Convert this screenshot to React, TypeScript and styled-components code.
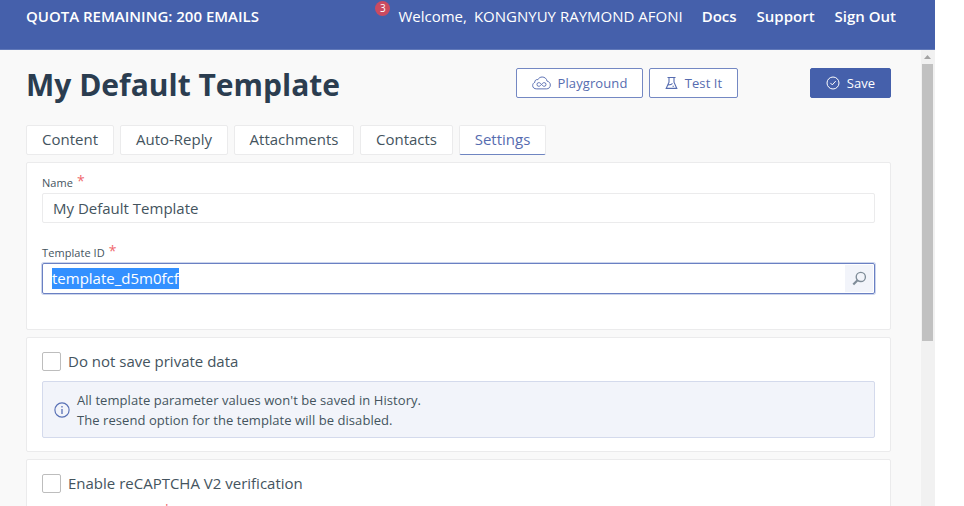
import React from 'react';
import styled, { createGlobalStyle } from 'styled-components';

const GlobalStyle = createGlobalStyle`
  *, *::before, *::after { box-sizing: border-box; }
  body { margin: 0; background: #fff; overflow: hidden; }
  button, input { font-family: inherit; }
`;

const brand = '#4560ab';
const line = '#ebebec';

const Page = styled.div`
  width: 935px;
  height: 506px;
  overflow: hidden;
  display: flex;
  flex-direction: column;
  background: #f9f9f9;
  color: #44545e;
  font-family: 'Open Sans', 'Noto Sans', sans-serif;
`;

const Header = styled.header`
  flex: none;
  height: 50px;
  padding: 0 39px 0 26px;
  display: flex;
  justify-content: space-between;
  align-items: flex-start;
  background: ${brand};
  border-bottom: 1px solid #6179b9;
  color: #fff;
`;

const Quota = styled.div`
  font-size: 15px;
  font-weight: 600;
  line-height: 20px;
  padding-top: 6px;
  white-space: nowrap;
`;

const UserNav = styled.nav`
  display: flex;
  align-items: flex-start;
  font-size: 15px;
  line-height: 20px;
  white-space: nowrap;
`;

const Badge = styled.span`
  width: 15px;
  height: 15px;
  margin: 1px 8px 0 0;
  border-radius: 50%;
  background: #cb4a60;
  font-size: 10px;
  line-height: 15px;
  text-align: center;
`;

const Welcome = styled.span<{ $gap: number }>`
  padding-top: 6px;
  margin-right: ${(p) => p.$gap}px;
  font-weight: 400;
`;

const NavLink = styled.a`
  padding-top: 6px;
  font-weight: 600;
  & + & { margin-left: 20px; }
`;

const Body = styled.div`
  flex: 1;
  min-height: 0;
  display: flex;
  justify-content: space-between;
`;

const Main = styled.main`
  width: 865px;
  margin-left: 26px;
  display: flex;
  flex-direction: column;
`;

const TitleRow = styled.div`
  flex: none;
  display: flex;
  align-items: flex-start;
  height: 75px;
  padding-top: 18px;
`;

const Title = styled.h1`
  flex: 1;
  margin: -3px 0 0;
  font-size: 30px;
  line-height: 40px;
  font-weight: 700;
  color: #2b3d50;
  white-space: nowrap;
`;

const Button = styled.button<{ $width: number; $primary?: boolean }>`
  width: ${(p) => p.$width}px;
  height: 30px;
  padding: 0;
  margin-left: ${(p) => (p.$primary ? 72 : 6)}px;
  display: flex;
  align-items: center;
  justify-content: center;
  gap: 7px;
  border: 1px solid ${(p) => (p.$primary ? brand : '#7488c3')};
  border-radius: 2px;
  background: ${(p) => (p.$primary ? brand : '#fff')};
  color: ${(p) => (p.$primary ? '#fff' : '#566cb0')};
  font-size: 13px;
  font-weight: ${(p) => (p.$primary ? 500 : 400)};
  letter-spacing: 0.1px;
`;

const Tabs = styled.div`
  flex: none;
  display: flex;
  gap: 6px;
  height: 37px;
`;

const Tab = styled.div<{ $width: number; $active?: boolean }>`
  width: ${(p) => p.$width}px;
  height: 30px;
  border: 1px solid ${line};
  border-bottom-color: ${(p) => (p.$active ? '#6f85c1' : line)};
  border-radius: 2px;
  background: #fff;
  color: ${(p) => (p.$active ? '#566cb0' : '#44545e')};
  font-size: 15px;
  line-height: 26px;
  text-align: center;
`;

const Card = styled.section<{ $height: number }>`
  flex: none;
  height: ${(p) => p.$height}px;
  padding: 0 15px;
  border: 1px solid ${line};
  border-radius: 2px;
  background: #fff;
  & + & { margin-top: 7px; }
`;

const Label = styled.label<{ $top: number; $indent?: number }>`
  display: flex;
  gap: 4px;
  padding-top: ${(p) => p.$top}px;
  padding-left: ${(p) => p.$indent ?? 0}px;
  font-size: 11px;
  line-height: 16px;
  letter-spacing: 0.07px;
  white-space: nowrap;
`;

const Star = styled.span`
  color: #f0696f;
  font-size: 14px;
  line-height: 12px;
`;

const NameField = styled.div`
  height: 30px;
  margin-top: 2px;
  padding-left: 10px;
  border: 1px solid ${line};
  border-radius: 2px;
  font-size: 15px;
  line-height: 28px;
`;

const IdField = styled.div`
  height: 31px;
  margin-top: 2px;
  padding: 1px 1px 1px 9px;
  display: flex;
  align-items: center;
  justify-content: space-between;
  border: 1px solid #6a80c3;
  border-radius: 2px;
  box-shadow: 0 0 0 1px #ccd5ec;
`;

const Selection = styled.span`
  background: #3390ff;
  color: #fff;
  font-size: 15px;
  line-height: 21px;
  height: 21px;
`;

const SearchButton = styled.span`
  width: 28px;
  height: 27px;
  display: flex;
  align-items: center;
  justify-content: center;
  background: #f2f4fa;
`;

const CheckRow = styled.div`
  display: flex;
  align-items: center;
  gap: 7px;
  height: 20px;
  margin-top: 13px;
  font-size: 15px;
  line-height: 20px;
`;

const Checkbox = styled.span`
  width: 19px;
  height: 19px;
  border: 1px solid #bdbdbd;
  border-radius: 2px;
`;

const Notice = styled.div`
  height: 57px;
  margin-top: 10px;
  padding-left: 11px;
  display: flex;
  align-items: center;
  gap: 7px;
  border: 1px solid #d4daec;
  border-radius: 2px;
  background: #f2f4fa;
  font-size: 13px;
  line-height: 20px;
  letter-spacing: 0.06px;
`;

const Scrollbar = styled.div`
  width: 14px;
  padding: 0 2px 0 1px;
  background: #f1f1f1;
`;

const Arrow = styled.svg`
  display: block;
  width: 11px;
  height: 14px;
`;

const Thumb = styled.div`
  height: 277px;
  background: #c1c1c1;
`;

const CloudIcon = () => (
  <svg width="19" height="14" viewBox="0 0 20 14" fill="none" stroke="currentColor" strokeWidth="1">
    <path d="M5 13.200C2.300 13.200.7 11.800.7 9.700.7 8 1.700 6.800 3 6.300 2.600 4.300 4.600 2.900 6.200 3.500 7.200 1.500 8.900.7 10.700.7c2.700 0 4.700 1.700 5.100 4.300 2.100.4 3.500 2 3.500 4.100 0 2.500-1.700 4.100-4.100 4.100Z" />
    <path d="M10 8.500C8.800 7.200 8.100 6.600 7.200 6.600a1.950 1.950 0 0 0 0 3.900c.9 0 1.600-.7 2.800-2s1.900-1.900 2.800-1.900a1.950 1.950 0 0 1 0 3.900c-.9 0-1.600-.7-2.800-2Z" />
  </svg>
);

const FlaskIcon = () => (
  <svg width="13" height="14" viewBox="0 0 13 14" fill="none" stroke="currentColor" strokeWidth="1.100">
    <path d="M2.500 1.500h8M4 1.500v4.700L1.200 12.400h10.600L9 6.200V1.500M3 9l3-.4 1.500-1.200M7.500 10.300h1.400" />
  </svg>
);

const CheckIcon = () => (
  <svg width="14" height="14" viewBox="0 0 14 14" fill="none" stroke="currentColor" strokeWidth="1">
    <circle cx="7" cy="7" r="6" />
    <path d="m4.400 6.900 1.900 2 3.400-3.800" />
  </svg>
);

const SearchIcon = () => (
  <svg width="15" height="15" viewBox="0 0 15 15" fill="none" stroke="#7f8c98">
    <circle cx="8.800" cy="5.900" r="4.600" strokeWidth="1.350" />
    <path d="M5.500 9.300 1.300 13.500" strokeWidth="2.200" />
  </svg>
);

const InfoIcon = () => (
  <svg width="16" height="16" viewBox="0 0 16 16" fill="none" stroke="#5870b5">
    <circle cx="8" cy="8" r="7.100" strokeWidth="1.150" />
    <path d="M8 7v5M8 4v1.500" strokeWidth="1.300" />
  </svg>
);

export default function App() {
  return (
    <Page>
      <GlobalStyle />
      <Header>
        <Quota>QUOTA REMAINING: 200 EMAILS</Quota>
        <UserNav>
          <Badge>3</Badge>
          <Welcome $gap={7}>Welcome,</Welcome>
          <Welcome $gap={19}>KONGNYUY RAYMOND AFONI</Welcome>
          <NavLink>Docs</NavLink>
          <NavLink>Support</NavLink>
          <NavLink>Sign Out</NavLink>
        </UserNav>
      </Header>
      <Body>
        <Main>
          <TitleRow>
            <Title>My Default Template</Title>
            <Button $width={127}><CloudIcon />Playground</Button>
            <Button $width={89}><FlaskIcon />Test It</Button>
            <Button $width={81} $primary><CheckIcon />Save</Button>
          </TitleRow>
          <Tabs>
            <Tab $width={88}>Content</Tab>
            <Tab $width={108}>Auto-Reply</Tab>
            <Tab $width={120}>Attachments</Tab>
            <Tab $width={93}>Contacts</Tab>
            <Tab $width={87} $active>Settings</Tab>
          </Tabs>
          <Card $height={168}>
            <Label $top={12}>Name <Star>*</Star></Label>
            <NameField>My Default Template</NameField>
            <Label $top={22}>Template ID <Star>*</Star></Label>
            <IdField>
              <Selection>template_d5m0fcf</Selection>
              <SearchButton><SearchIcon /></SearchButton>
            </IdField>
          </Card>
          <Card $height={115}>
            <CheckRow><Checkbox />Do not save private data</CheckRow>
            <Notice>
              <InfoIcon />
              <div>
                All template parameter values won't be saved in History.<br />
                The resend option for the template will be disabled.
              </div>
            </Notice>
          </Card>
          <Card $height={180}>
            <CheckRow><Checkbox />Enable reCAPTCHA V2 verification</CheckRow>
            <Label $top={11} $indent={121}><Star>*</Star></Label>
          </Card>
        </Main>
        <Scrollbar>
          <Arrow viewBox="0 0 11 14"><path d="M2 9 5.500 5 9 9Z" fill="#a3a3a3" /></Arrow>
          <Thumb />
        </Scrollbar>
      </Body>
    </Page>
  );
}
